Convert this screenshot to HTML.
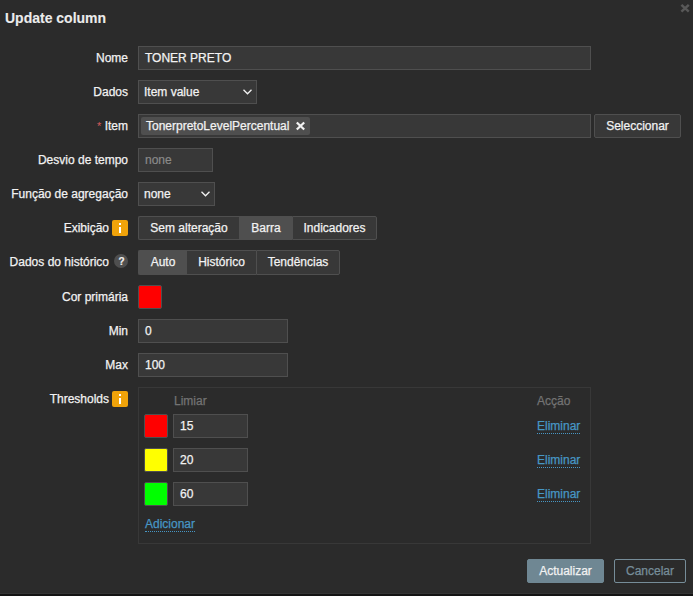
<!DOCTYPE html>
<html><head><meta charset="utf-8">
<style>
*{box-sizing:border-box;margin:0;padding:0}
html,body{width:693px;height:596px;overflow:hidden;background:#2b2b2b;font-family:"Liberation Sans",sans-serif;font-size:12px;color:#f2f2f2}
body{-webkit-text-stroke:0.25px currentColor}
.a{position:absolute}
.title{left:5px;top:9px;font-size:14px;font-weight:bold;line-height:18px;color:#ececec;-webkit-text-stroke:0.1px currentColor}
.close{left:678px;top:2px;width:12px;height:12px}
.lbl{position:absolute;right:565px;height:24px;line-height:24px;text-align:right;white-space:nowrap}
.inp{position:absolute;height:24px;background:#383838;border:1px solid #4f4f4f;padding:0 6px;line-height:22px;white-space:nowrap;overflow:hidden}
.sel{padding-left:5px}
.sel svg{position:absolute;right:4px;top:8px}
.btn{position:absolute;height:24px;line-height:22px;border:1px solid #4f4f4f;background:#383838;border-radius:2px;text-align:center}
.sg{position:absolute;height:24px;border:1px solid #4f4f4f;background:#383838;text-align:center;line-height:22px;white-space:nowrap}
.sg.on{background:#4f4f4f}
.sw{position:absolute;width:24px;height:24px;border:1px solid #4f4f4f;border-radius:2px}
.info{position:absolute;width:16px;height:16px;background:#f0a30a;border-radius:2px}
.info:before{content:"";position:absolute;left:7px;top:3px;width:2px;height:2px;background:#fff}
.info:after{content:"";position:absolute;left:7px;top:7px;width:2px;height:6px;background:#fff}
.help{position:absolute;width:14px;height:14px;border-radius:50%;background:#4f4f4f;color:#f2f2f2;font-weight:bold;font-size:10px;line-height:15px;padding-left:1px;text-align:center;-webkit-text-stroke:0.15px currentColor}
.link{position:absolute;color:#4796c4;border-bottom:1px dotted #4796c4;line-height:14px}
.th{position:absolute;color:#737373;line-height:14px}
</style></head><body>
<div class="a title">Update column</div>
<svg class="a" style="left:680px;top:3px" width="10" height="10" viewBox="0 0 10 10"><path d="M1.4 1.9L8.8 8.7M8.8 1.9L1.4 8.7" stroke="#585858" stroke-width="2.5"/></svg>

<div class="lbl" style="top:46px">Nome</div>
<div class="inp" style="left:138px;top:46px;width:453px">TONER PRETO</div>

<div class="lbl" style="top:80px">Dados</div>
<div class="inp sel" style="left:138px;top:80px;width:119px">Item value<svg width="9" height="6" viewBox="0 0 9 6"><path d="M0.5 0.8L4.5 4.8L8.5 0.8" fill="none" stroke="#f2f2f2" stroke-width="1.3"/></svg></div>

<div class="lbl" style="top:114px"><span style="color:#d65a5a;font-size:11px;-webkit-text-stroke:0">*</span> Item</div>
<div class="inp" style="left:138px;top:114px;width:453px;padding:0 3px">
  <div style="position:absolute;left:2px;top:2px;width:169px;height:18px;line-height:18px;background:#4f4f4f;padding:0 5px;border-radius:2px">TonerpretoLevelPercentual<svg style="position:absolute;left:154px;top:4px" width="11" height="10" viewBox="0 0 11 10"><path d="M1.8 1.5L9.2 8.5M9.2 1.5L1.8 8.5" stroke="#f2f2f2" stroke-width="2.3"/></svg></div>
</div>
<div class="btn" style="left:594px;top:114px;width:87px">Seleccionar</div>

<div class="lbl" style="top:148px">Desvio de tempo</div>
<div class="inp" style="left:138px;top:148px;width:75px;color:#8a8a8a;-webkit-text-stroke:0.2px #8a8a8a">none</div>

<div class="lbl" style="top:182px">Função de agregação</div>
<div class="inp sel" style="left:138px;top:182px;width:77px">none<svg width="9" height="6" viewBox="0 0 9 6"><path d="M0.5 0.8L4.5 4.8L8.5 0.8" fill="none" stroke="#f2f2f2" stroke-width="1.3"/></svg></div>

<div class="lbl" style="top:216px;right:584px">Exibição</div>
<div class="info" style="left:112px;top:220px"></div>
<div class="sg" style="left:138px;top:216px;width:101px;border-right:0;border-radius:2px 0 0 2px">Sem alteração</div>
<div class="sg on" style="left:239px;top:216px;width:53px;border-right:0">Barra</div>
<div class="sg" style="left:292px;top:216px;width:85px;border-radius:0 2px 2px 0">Indicadores</div>
</div>

<div class="lbl" style="top:250px;right:584px">Dados do histórico</div>
<div class="help" style="left:114px;top:254px">?</div>
<div class="sg on" style="left:138px;top:250px;width:49px;height:25px;border-right:0;border-radius:2px 0 0 2px">Auto</div>
<div class="sg" style="left:187px;top:250px;width:69px;height:25px;border-left:0;border-right:0">Histórico</div>
<div class="sg" style="left:256px;top:250px;width:84px;height:25px;border-radius:0 2px 2px 0">Tendências</div>
</div>

<div class="lbl" style="top:285px">Cor primária</div>
<div class="sw" style="left:138px;top:285px;background:#ff0000"></div>

<div class="lbl" style="top:319px">Min</div>
<div class="inp" style="left:138px;top:319px;width:150px">0</div>

<div class="lbl" style="top:353px">Max</div>
<div class="inp" style="left:138px;top:353px;width:150px">100</div>

<div class="lbl" style="top:387px;right:584px;height:24px">Thresholds</div>
<div class="info" style="left:112px;top:391px"></div>
<div class="a" style="left:138px;top:387px;width:453px;height:157px;border:1px solid #383838"></div>
<div class="th" style="left:174px;top:394px">Limiar</div>
<div class="th" style="left:537px;top:394px">Acção</div>

<div class="sw" style="left:144px;top:414px;background:#ff0000"></div>
<div class="inp" style="left:173px;top:414px;width:75px">15</div>
<div class="link" style="left:537px;top:419px">Eliminar</div>

<div class="sw" style="left:144px;top:448px;background:#ffff00"></div>
<div class="inp" style="left:173px;top:448px;width:75px">20</div>
<div class="link" style="left:537px;top:453px">Eliminar</div>

<div class="sw" style="left:144px;top:482px;background:#00ff00"></div>
<div class="inp" style="left:173px;top:482px;width:75px">60</div>
<div class="link" style="left:537px;top:487px">Eliminar</div>

<div class="link" style="left:145px;top:517px">Adicionar</div>

<div class="btn" style="left:527px;top:559px;width:77px;background:#6f8793;border-color:#6f8793;color:#f2f2f2">Actualizar</div>
<div class="btn" style="left:614px;top:559px;width:72px;background:transparent;border-color:#768d99;color:#768d99">Cancelar</div>

<div class="a" style="left:0;top:593px;width:693px;height:1px;background:#343434"></div><div class="a" style="left:0;top:594px;width:693px;height:2px;background:#131313"></div>
</body></html>
